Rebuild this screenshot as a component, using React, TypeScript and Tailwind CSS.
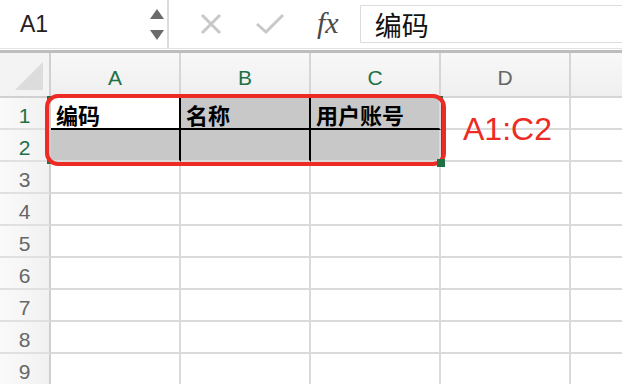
import React from 'react';

const cols = ['A', 'B', 'C', 'D', 'E'];
const rows = [1, 2, 3, 4, 5, 6, 7, 8, 9];

const sans = { fontFamily: '"Liberation Sans", Arial, sans-serif' };
const cjk = { fontFamily: '"Noto Sans CJK SC", "Liberation Sans", sans-serif' };

// cell content for the small table in A1:C2
const data: Record<string, string> = { A1: '编码', B1: '名称', C1: '用户账号' };

const cellClass = (col: string, row: number) => {
  const inTable = row <= 2 && (col === 'A' || col === 'B' || col === 'C');
  if (!inTable) return 'border-r-2 border-b-2 border-[#dadada] bg-white';
  const bg = col === 'A' && row === 1 ? 'bg-white' : 'bg-[#c8c8c8]';
  const right = col === 'C' ? 'border-r-2 border-[#dadada]' : 'border-r-2 border-r-black';
  const bottom = row === 1 ? 'border-b-2 border-b-black' : 'border-b-2 border-b-[#dadada]';
  return `${bg} ${right} ${bottom}`;
};

export default function App() {
  return (
    <div className="w-[622px] h-[384px] overflow-hidden bg-white" style={sans}>
      {/* formula bar */}
      <div className="h-[49px] flex items-stretch border-b border-[#e2e2e2]">
        <div className="w-[169px] border-r-2 border-[#dcdcdc] flex items-center justify-between pl-5 pr-[3px]">
          <span className="text-[23px] text-[#222]">A1</span>
          <div className="flex flex-col gap-[11px]">
            <svg width="14" height="10" viewBox="0 0 14 10"><polygon points="7,0 14,10 0,10" fill="#6b6b6b" /></svg>
            <svg width="14" height="10" viewBox="0 0 14 10"><polygon points="0,0 14,0 7,10" fill="#6b6b6b" /></svg>
          </div>
        </div>
        <div className="flex items-center pl-[31px]">
          <svg width="22" height="22" viewBox="0 0 22 22">
            <path d="M2 2 L20 20 M20 2 L2 20" stroke="#c8c8c8" strokeWidth="3" />
          </svg>
          <svg width="30" height="22" viewBox="0 0 30 22" className="ml-[33px]">
            <path d="M2 11 L11 19 L28 2" stroke="#c8c8c8" strokeWidth="3" fill="none" />
          </svg>
          <span className="ml-[32px] text-[30px] italic text-[#4a4a4a] leading-none pb-[2px]" style={{ fontFamily: '"Liberation Serif", serif' }}>
            fx
          </span>
        </div>
        <div className="ml-[21px] my-[5px] flex-1 border border-r-0 border-[#dcdcdc] flex items-center pl-[14px]">
          <span className="text-[27px] text-[#111] leading-none" style={cjk}>编码</span>
        </div>
      </div>
      <div className="h-[1px] bg-white" />
      <div className="h-[3px] bg-[#bdbdbd]" />

      {/* sheet */}
      <div className="relative">
        <div className="grid grid-cols-[51px_130px_130px_130px_130px_130px]">
          {/* header row */}
          <div className="h-[45px] border-r-2 border-b-2 border-[#d0d0d0] bg-[#f3f3f3] flex items-end justify-end p-[6px]">
            <svg width="28" height="28" viewBox="0 0 28 28"><polygon points="28,0 28,28 0,28" fill="#dcdcdc" /></svg>
          </div>
          {cols.map((c) => (
            <div
              key={c}
              className={`h-[45px] border-r-2 border-b-2 border-[#d6d6d6] bg-gradient-to-b from-[#f8f8f8] to-[#efefef] flex items-center justify-center pt-[6px] text-[21px] ${
                c === 'A' || c === 'B' || c === 'C' ? 'text-[#1e7145]' : 'text-[#666]'
              }`}
            >
              {c === 'E' ? '' : c}
            </div>
          ))}

          {rows.map((r) => (
            <React.Fragment key={r}>
              <div
                className={`h-[32px] border-r-2 border-b-2 border-[#e0e0e0] border-r-[#cfcfcf] bg-gradient-to-r from-[#fafafa] to-[#f1f1f1] flex items-center justify-center pt-[5px] text-[21px] ${
                  r <= 2 ? 'text-[#1e7145]' : 'text-[#666]'
                }`}
              >
                {r}
              </div>
              {cols.map((c) => (
                <div key={c + r} className={`h-[32px] flex items-center pl-[5px] ${cellClass(c, r)}`}>
                  {data[c + r] && (
                    <span className="text-[22px] font-bold text-black leading-none pt-[2px]" style={cjk}>
                      {data[c + r]}
                    </span>
                  )}
                </div>
              ))}
            </React.Fragment>
          ))}
        </div>

        {/* selection + annotation overlays */}
        <div className="absolute left-[47px] top-[43px] w-[396px] h-[68px] border-2 border-[#1e7145]" />
        <div className="absolute left-[45px] top-[41px] w-[401px] h-[72px] border-4 border-[#ee2a24] rounded-[13px]" />
        <div className="absolute left-[437px] top-[106px] w-[8px] h-[8px] bg-[#1e7145]" />
        <div className="absolute left-[463px] top-[60px] text-[32px] leading-none text-[#ee2a24]">A1:C2</div>
      </div>
    </div>
  );
}
